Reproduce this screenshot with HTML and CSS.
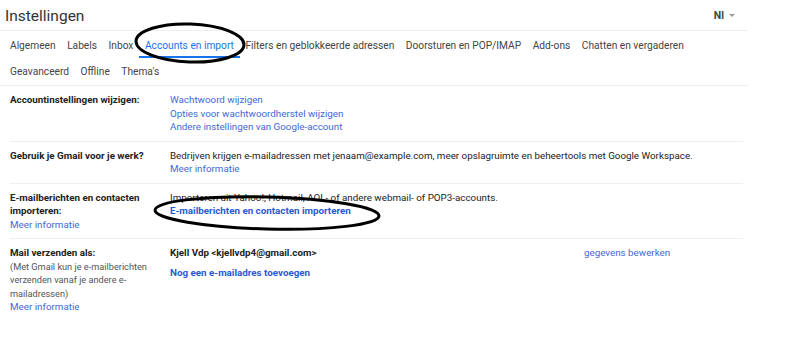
FILE: index.html
```html
<!DOCTYPE html>
<html lang="nl">
<head>
    <meta charset="UTF-8">
    <title>Instellingen - Gmail</title>
    <link rel="stylesheet" href="styles.css">
</head>
<body>
    <div class="settings">
        <header class="top">
            <h1>Instellingen</h1>
            <div class="lang">Nl <span class="caret"></span></div>
        </header>

        <nav class="tabs">
            <div class="tab-row">
                <a class="tab">Algemeen</a>
                <a class="tab">Labels</a>
                <a class="tab">Inbox</a>
                <a class="tab active">Accounts en import</a>
                <a class="tab">Filters en geblokkeerde adressen</a>
                <a class="tab">Doorsturen en POP/IMAP</a>
                <a class="tab">Add-ons</a>
                <a class="tab">Chatten en vergaderen</a>
            </div>
            <div class="tab-row">
                <a class="tab">Geavanceerd</a>
                <a class="tab">Offline</a>
                <a class="tab">Thema's</a>
            </div>
        </nav>

        <section class="row">
            <div class="label">Accountinstellingen wijzigen:</div>
            <div class="value">
                <a class="link">Wachtwoord wijzigen</a>
                <a class="link">Opties voor wachtwoordherstel wijzigen</a>
                <a class="link">Andere instellingen van Google-account</a>
            </div>
        </section>

        <section class="row">
            <div class="label">Gebruik je Gmail voor je werk?</div>
            <div class="value">
                <span>Bedrijven krijgen e-mailadressen met jenaam@example.com, meer opslagruimte en beheertools met Google Workspace.</span>
                <a class="link">Meer informatie</a>
            </div>
        </section>

        <section class="row">
            <div class="label">
                E-mailberichten en contacten importeren:
                <a class="link normal">Meer informatie</a>
            </div>
            <div class="value">
                <span>Importeren uit Yahoo!, Hotmail, AOL- of andere webmail- of POP3-accounts.</span>
                <a class="link strong">E-mailberichten en contacten importeren</a>
            </div>
        </section>

        <section class="row last">
            <div class="label">
                Mail verzenden als:
                <span class="hint">(Met Gmail kun je e-mailberichten verzenden vanaf je andere e-mailadressen)</span>
                <a class="link normal">Meer informatie</a>
            </div>
            <div class="value">
                <div class="sender">
                    <b>Kjell Vdp &lt;kjellvdp4@gmail.com&gt;</b>
                    <a class="link">gegevens bewerken</a>
                </div>
                <a class="link strong add">Nog een e-mailadres toevoegen</a>
            </div>
        </section>
    </div>

    <!-- hand-drawn marks over the screenshot -->
    <svg class="marks" width="800" height="347" viewBox="0 0 800 347">
        <ellipse cx="190" cy="43" rx="54" ry="19" transform="rotate(2 190 43)" />
        <ellipse cx="267" cy="213" rx="112" ry="16" transform="rotate(1.5 267 213)" />
    </svg>
</body>
</html>
```

FILE: styles.css
```css
:root {
    --text: #222;
    --muted: #555;
    --line: #efefef;
    --link: #4169d8;
    --link-strong: #2a5bd2;
    --active: #1a73e8;
}

* {
    margin: 0;
    padding: 0;
    box-sizing: border-box;
}

body {
    font-family: Roboto, Arial, sans-serif;
    font-size: 9.8px;
    color: var(--text);
    background: #fff;
    width: 800px;
    height: 347px;
    overflow: hidden;
    position: relative;
}

a {
    cursor: pointer;
}

.settings {
    width: 748px;
}

.top {
    display: flex;
    align-items: center;
    justify-content: space-between;
    height: 31px;
    padding: 0 13px 0 5px;
    border-bottom: 1px solid var(--line);
}

.top h1 {
    font-weight: 400;
    font-size: 15.5px;
    color: #333;
    margin-top: 1px;
}

.lang {
    font-weight: 700;
    font-size: 10.5px;
    color: #444;
    display: flex;
    align-items: center;
    gap: 5px;
}

.caret {
    width: 0;
    height: 0;
    border-left: 3px solid transparent;
    border-right: 3px solid transparent;
    border-top: 3px solid #999;
}

.tabs {
    padding: 0 0 0 10px;
    border-bottom: 1px solid var(--line);
}

.tab-row {
    display: flex;
    gap: 11.5px;
    height: 27px;
    align-items: center;
}

.tab-row:first-child {
    height: 27px;
    padding-top: 1px;
}

.tab {
    color: #444;
    font-size: 10.2px;
    position: relative;
}

.tab.active {
    color: var(--active);
}

.tab.active::after {
    content: "";
    position: absolute;
    left: -6px;
    right: -6px;
    bottom: -7px;
    height: 2px;
    background: var(--active);
}

.row {
    display: grid;
    grid-template-columns: 160px 1fr;
    width: 733px;
    margin-left: 10px;
    padding: 7px 0 7px;
    border-bottom: 1px solid var(--line);
    line-height: 13.5px;
}

.row.last {
    border-bottom: none;
}

.label {
    font-weight: 700;
    padding-right: 8px;
}

.value {
    display: flex;
    flex-direction: column;
}

.link {
    color: var(--link);
    font-weight: 400;
}

.label .link {
    display: block;
}

.link.strong {
    color: var(--link-strong);
    font-weight: 700;
}

.hint {
    display: block;
    font-weight: 400;
    font-size: 9.2px;
    color: var(--muted);
    line-height: 13.5px;
}

.sender {
    display: grid;
    grid-template-columns: 414px auto;
}

.add {
    margin-top: 6.5px;
}

.marks {
    position: absolute;
    left: 0;
    top: 0;
    pointer-events: none;
}

.marks ellipse {
    fill: none;
    stroke: #000;
    stroke-width: 3;
}
```
